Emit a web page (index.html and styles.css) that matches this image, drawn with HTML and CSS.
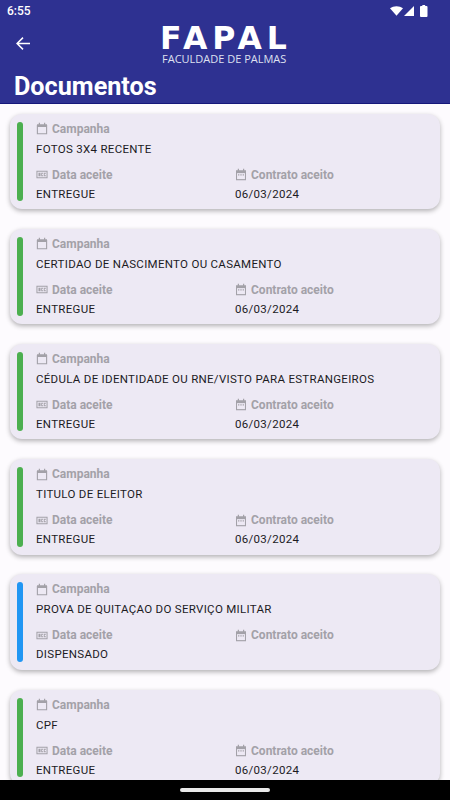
FILE: index.html
```html
<!DOCTYPE html>
<html lang="pt">
<head>
<meta charset="utf-8">
<title>Documentos</title>
<link rel="stylesheet" href="styles.css">
</head>
<body>
<svg class="defs" width="0" height="0" aria-hidden="true">
  <symbol id="cal" viewBox="-0.5 -0.5 13 14"><path fill="none" stroke="currentColor" stroke-width="1.2" d="M1 3.2h10v9H1z"/><path fill="currentColor" d="M.6 2h10.8v3H.6zM2.500.4h1.300V2H2.500zM8.200.4h1.300V2H8.200z"/></symbol>
  <symbol id="cal2" viewBox="-0.5 -0.5 13 14"><path fill="currentColor" d="M.6 2h10.800v10.600H.6zM2.500.4h1.300V2H2.500zM8.200.4h1.300V2H8.200z"/><path fill="#ede9f4" d="M1.700 5h8.600v6.500H1.700z"/><path fill="currentColor" d="M2.800 6.200h1.400v1.400H2.800zM5.300 6.200h1.400v1.400H5.300zM7.800 6.200h1.400v1.400H7.800z"/></symbol>
  <symbol id="card" viewBox="-0.5 -1.500 14 13"><path fill="currentColor" fill-rule="evenodd" d="M0 .5h13v9H0zM1.200 1.700v6.600h10.600V1.700z"/><path fill="currentColor" d="M2.400 3h2.400v4H2.400zM5.600 3h2.200v1H6.600v2h1.200v1H5.600zM8.600 3H11v1H9.600v2H11v1H8.600z"/></symbol>
</svg>
<div class="screen">
  <header class="header">
    <div class="status">
      <span class="time">6:55</span>
      <span class="status-icons">
        <svg class="wifi" width="13" height="10" viewBox="0 0 14 11" preserveAspectRatio="none"><path fill="#fff" d="M0 2.600C3.800-.6 10.200-.6 14 2.600L7 10.800z"/></svg>
        <svg class="signal" width="10" height="10" viewBox="0 0 10 10"><path fill="#fff" d="M10 0v10H0z"/></svg>
        <svg class="battery" width="7.500" height="12" viewBox="0 0 8 12" preserveAspectRatio="none"><path fill="#fff" d="M2.500 0h3v1H7a1 1 0 0 1 1 1v9a1 1 0 0 1-1 1H1a1 1 0 0 1-1-1V2a1 1 0 0 1 1-1h1.500z"/></svg>
      </span>
    </div>
    <div class="toolbar">
      <svg class="back" width="14" height="13" viewBox="0 0 14 13"><path fill="none" stroke="#fff" stroke-width="1.500" d="M14 6.500H1.200M7 .6 1.100 6.500 7 12.400"/></svg>
      <div class="logo">
        <div class="logo-name">FAPAL</div>
        <div class="logo-sub">FACULDADE DE PALMAS</div>
      </div>
    </div>
    <h1 class="title">Documentos</h1>
  </header>
  <main class="list">
    <article class="card">
      <span class="bar green"></span>
      <div class="body">
        <div class="label"><svg class="ic"><use href="#cal"/></svg>Campanha</div>
        <div class="value">FOTOS 3X4 RECENTE</div>
        <div class="cols">
          <div><div class="label"><svg class="ic"><use href="#card"/></svg>Data aceite</div><div class="value">ENTREGUE</div></div>
          <div><div class="label"><svg class="ic"><use href="#cal2"/></svg>Contrato aceito</div><div class="value">06/03/2024</div></div>
        </div>
      </div>
    </article>
    <article class="card">
      <span class="bar green"></span>
      <div class="body">
        <div class="label"><svg class="ic"><use href="#cal"/></svg>Campanha</div>
        <div class="value">CERTIDAO DE NASCIMENTO OU CASAMENTO</div>
        <div class="cols">
          <div><div class="label"><svg class="ic"><use href="#card"/></svg>Data aceite</div><div class="value">ENTREGUE</div></div>
          <div><div class="label"><svg class="ic"><use href="#cal2"/></svg>Contrato aceito</div><div class="value">06/03/2024</div></div>
        </div>
      </div>
    </article>
    <article class="card">
      <span class="bar green"></span>
      <div class="body">
        <div class="label"><svg class="ic"><use href="#cal"/></svg>Campanha</div>
        <div class="value">CÉDULA DE IDENTIDADE OU RNE/VISTO PARA ESTRANGEIROS</div>
        <div class="cols">
          <div><div class="label"><svg class="ic"><use href="#card"/></svg>Data aceite</div><div class="value">ENTREGUE</div></div>
          <div><div class="label"><svg class="ic"><use href="#cal2"/></svg>Contrato aceito</div><div class="value">06/03/2024</div></div>
        </div>
      </div>
    </article>
    <article class="card">
      <span class="bar green"></span>
      <div class="body">
        <div class="label"><svg class="ic"><use href="#cal"/></svg>Campanha</div>
        <div class="value">TITULO DE ELEITOR</div>
        <div class="cols">
          <div><div class="label"><svg class="ic"><use href="#card"/></svg>Data aceite</div><div class="value">ENTREGUE</div></div>
          <div><div class="label"><svg class="ic"><use href="#cal2"/></svg>Contrato aceito</div><div class="value">06/03/2024</div></div>
        </div>
      </div>
    </article>
    <article class="card">
      <span class="bar blue"></span>
      <div class="body">
        <div class="label"><svg class="ic"><use href="#cal"/></svg>Campanha</div>
        <div class="value">PROVA DE QUITAÇAO DO SERVIÇO MILITAR</div>
        <div class="cols">
          <div><div class="label"><svg class="ic"><use href="#card"/></svg>Data aceite</div><div class="value">DISPENSADO</div></div>
          <div><div class="label"><svg class="ic"><use href="#cal2"/></svg>Contrato aceito</div><div class="value"></div></div>
        </div>
      </div>
    </article>
    <article class="card">
      <span class="bar green"></span>
      <div class="body">
        <div class="label"><svg class="ic"><use href="#cal"/></svg>Campanha</div>
        <div class="value">CPF</div>
        <div class="cols">
          <div><div class="label"><svg class="ic"><use href="#card"/></svg>Data aceite</div><div class="value">ENTREGUE</div></div>
          <div><div class="label"><svg class="ic"><use href="#cal2"/></svg>Contrato aceito</div><div class="value">06/03/2024</div></div>
        </div>
      </div>
    </article>
  </main>
  <footer class="nav"><span class="pill"></span></footer>
</div>
</body>
</html>
```

FILE: styles.css
```css
* { box-sizing: border-box; }
html, body { margin: 0; padding: 0; }
body { background: #fffbff; font-family: Roboto, "Liberation Sans", sans-serif; }
.defs { display: block; height: 0; }
.screen { width: 450px; height: 800px; display: flex; flex-direction: column; overflow: hidden; background: #fdfbfe; }
.header { height: 104px; flex: none; background: #2e3191; border-bottom: 1px solid #15177a; color: #fff; }
.status { height: 22px; display: flex; align-items: center; justify-content: space-between; padding: 0 22.500px 0 7px; }
.time { font-size: 12px; font-weight: 500; }
.status-icons { display: flex; align-items: center; gap: 1px; }
.battery { margin-left: 5.500px; }
.toolbar { height: 48px; display: flex; align-items: flex-start; }
.back { margin: 15px 0 0 16px; flex: none; }
.logo { margin: 1.500px 0 0 132px; width: 125px; }
.logo-name { margin-left: -2px; font-family: "DejaVu Sans", sans-serif; font-weight: 700; font-size: 31.500px; line-height: 28px; letter-spacing: 5px; white-space: nowrap; }
.logo-sub { font-family: "Open Sans", sans-serif; font-size: 11px; line-height: 13px; white-space: nowrap; color: #dfe0f0; }
.title { margin: 0 0 0 14px; font-size: 25.200px; line-height: 33px; font-weight: 700; }
.list { flex: 1; min-height: 0; overflow: hidden; padding: 9.600px 10px 0; display: flex; flex-direction: column; gap: 19.800px; }
.card { flex: none; height: 95.400px; background: #ede9f4; border-radius: 12px; box-shadow: 0 2px 5px rgba(0,0,0,.3); display: flex; padding: 8px 7px; }
.bar { width: 5.500px; border-radius: 3px; flex: none; }
.green { background: #4caf50; }
.blue { background: #2196f3; }
.body { flex: 1; margin-left: 13.500px; min-width: 0; }
.label { height: 14px; display: flex; align-items: center; gap: 4px; font-size: 12px; font-weight: 700; color: #a3a1a8; white-space: nowrap; }
.ic { width: 12px; height: 13px; flex: none; color: #a3a1a8; }
.value { height: 14px; margin-top: 6px; font-size: 11.500px; line-height: 14px; color: #1c1b1f; letter-spacing: .3px; white-space: nowrap; }
.cols { display: grid; grid-template-columns: 199px 1fr; margin-top: 12px; }
.cols .value { margin-top: 5px; }
.nav { height: 20px; flex: none; background: #000; display: flex; align-items: center; justify-content: center; position: relative; z-index: 1; }
.pill { width: 90px; height: 3.500px; border-radius: 2px; background: #e8e8e8; }
```
